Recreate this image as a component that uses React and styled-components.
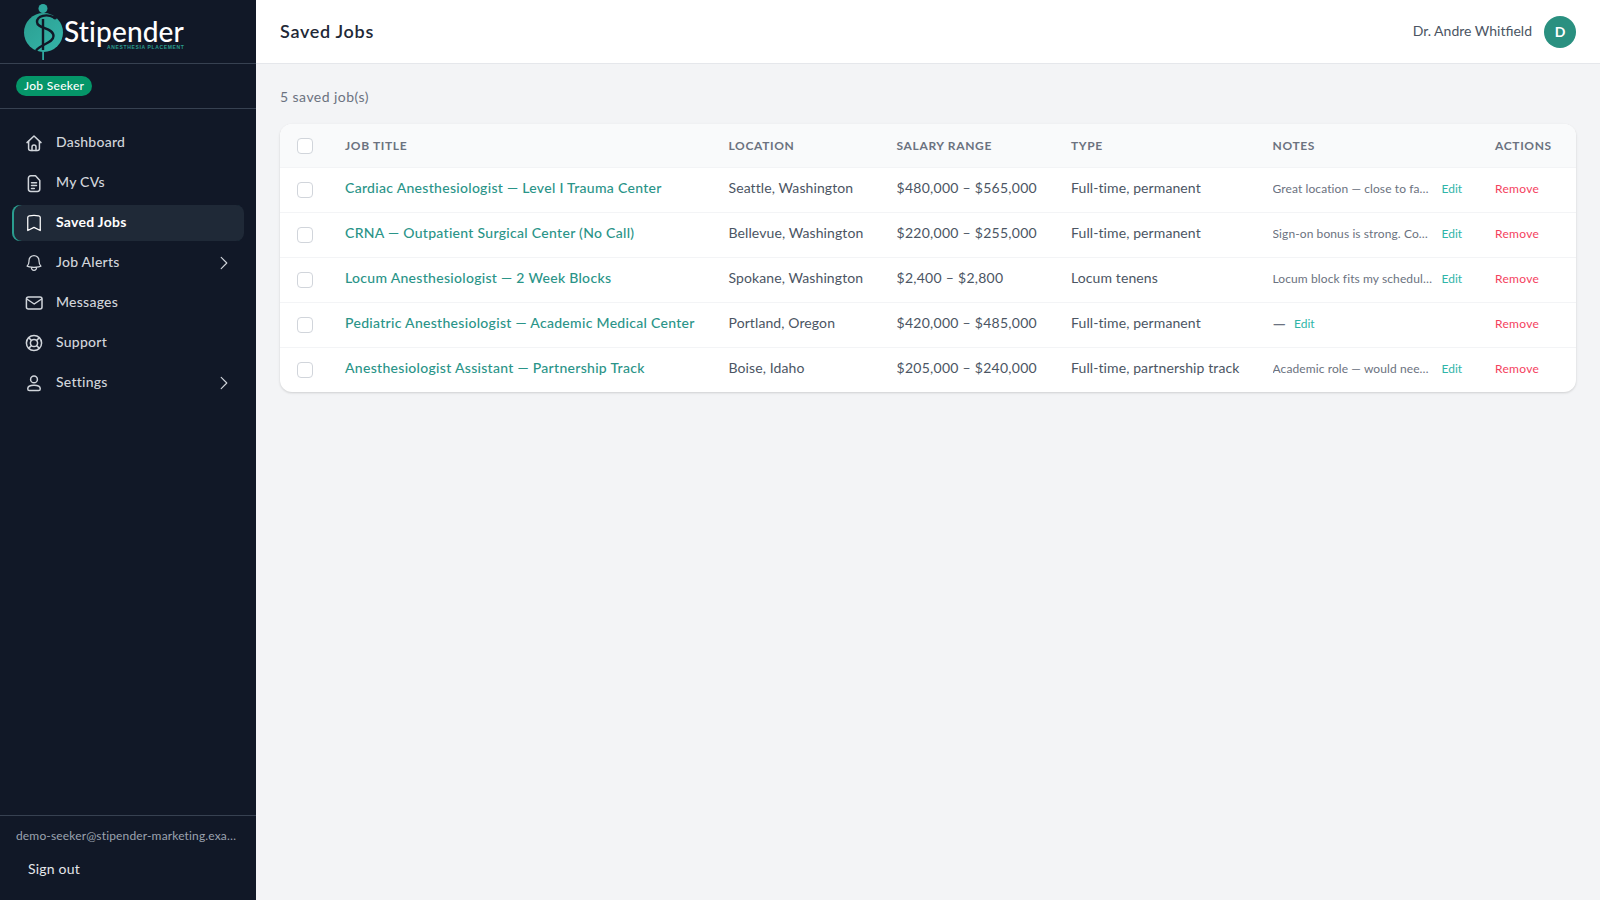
import React from 'react';
import styled, { createGlobalStyle } from 'styled-components';
import { HiOutlineBookmark, HiOutlineBell, HiOutlineChevronRight } from 'react-icons/hi2';

const GlobalStyle = createGlobalStyle`
  html, body { margin: 0; padding: 0; height: 100%; }
  body { font-family: "Lato", "Liberation Sans", sans-serif; background: #f3f4f6; }
  * { box-sizing: border-box; }
`;

const Shell = styled.div`
  display: flex;
  height: 900px;
  overflow: hidden;
`;

const Sidebar = styled.aside`
  width: 256px;
  flex: none;
  display: flex;
  flex-direction: column;
  background: #111827;
`;

const Brand = styled.div`
  height: 64px;
  flex: none;
  display: flex;
  align-items: flex-start;
  padding-left: 22px;
  border-bottom: 1px solid #374151;
`;

const BrandWords = styled.div`
  position: relative;
  margin-top: 13px;
  color: #fff;
  font-size: 28px;
  line-height: 36px;
  font-weight: 500;
  letter-spacing: 0.15px;
`;

const BrandTag = styled.span`
  position: absolute;
  left: 43px;
  top: 31px;
  color: #2a9d8f;
  font-family: "Liberation Sans", sans-serif;
  font-size: 5px;
  line-height: 6px;
  font-weight: 700;
  letter-spacing: 0.65px;
  white-space: nowrap;
`;

const RoleRow = styled.div`
  height: 45px;
  flex: none;
  display: flex;
  align-items: center;
  padding-left: 16px;
  border-bottom: 1px solid #374151;
`;

const RoleBadge = styled.span`
  height: 20px;
  padding: 0 8px 1px;
  display: inline-flex;
  align-items: center;
  border-radius: 999px;
  background: #059669;
  color: #fff;
  font-size: 12px;
  font-weight: 500;
  letter-spacing: 0.3px;
`;

const Nav = styled.nav`
  flex: 1;
  display: flex;
  flex-direction: column;
  gap: 4px;
  padding: 16px 12px;
`;

const NavItem = styled.a`
  height: 36px;
  display: flex;
  align-items: center;
  gap: 12px;
  padding: 0 11px 0 12px;
  border-radius: 8px;
  font-size: 14px;
  font-weight: ${p => (p.$active ? 700 : 500)};
  color: ${p => (p.$active ? '#fff' : '#d1d5db')};
  background: ${p => (p.$active ? '#1f2937' : 'transparent')};
  box-shadow: ${p => (p.$active ? 'inset 2px 0 0 #2a9d8f' : 'none')};
  > svg { font-size: 20px; flex: none; }
  > svg.more { font-size: 18px; }
`;

const NavLabel = styled.span`
  flex: 1;
  padding-bottom: 3px;
  letter-spacing: 0.25px;
`;

const LineIcon = styled.svg.attrs({ viewBox: '0 0 20 20', fill: 'none' })`
  width: 20px;
  height: 20px;
  stroke: currentColor;
  stroke-width: 1.5;
  stroke-linecap: round;
  stroke-linejoin: round;
`;

const HomeIcon = () => (
  <LineIcon>
    <path d="M3 9.6 10 3l7 6.6" />
    <path d="M4.6 8.2V15.5a2 2 0 0 0 2 2h6.8a2 2 0 0 0 2-2V8.2" />
    <path d="M8 17.5v-3.6a2 2 0 0 1 4 0v3.6" />
  </LineIcon>
);

const DocIcon = () => (
  <LineIcon>
    <path d="M6.8 2.8h4.7l4.3 4.6V16a2.4 2.4 0 0 1-2.4 2.4H6.8A2.4 2.4 0 0 1 4.4 16V5.2a2.4 2.4 0 0 1 2.4-2.4z" />
    <path d="M7.5 9.8h5M7.5 12.6h5M7.5 15.4h2.8" />
  </LineIcon>
);

const MailIcon = () => (
  <LineIcon>
    <rect x="2.4" y="4" width="15.6" height="12" rx="2" />
    <path d="M2.8 6l7.4 5 7.4-5" />
  </LineIcon>
);

const SupportIcon = () => (
  <LineIcon>
    <circle cx="10" cy="10" r="7.6" />
    <circle cx="10" cy="10" r="3.6" />
    <path d="M4.7 4.7l2.7 2.7M15.3 4.7l-2.7 2.7M4.7 15.3l2.7-2.7M15.3 15.3l-2.7-2.7" />
  </LineIcon>
);

const UserIcon = () => (
  <LineIcon>
    <circle cx="10" cy="6.4" r="3.4" />
    <path d="M3.8 15.6c0-2.4 2.8-3.4 6.2-3.4s6.2 1 6.2 3.4v.4a1.6 1.6 0 0 1-1.6 1.6H5.4A1.6 1.6 0 0 1 3.8 16z" />
  </LineIcon>
);

const SideFoot = styled.div`
  flex: none;
  height: 85px;
  padding: 12px 16px 0;
  border-top: 1px solid #374151;
`;

const Email = styled.div`
  color: #9ca3af;
  font-size: 12px;
  line-height: 16px;
  letter-spacing: 0.15px;
  white-space: nowrap;
  overflow: hidden;
  text-overflow: ellipsis;
`;

const SignOut = styled.button`
  display: block;
  margin-top: 15px;
  padding: 0 12px;
  border: 0;
  background: none;
  color: #e5e7eb;
  font-family: inherit;
  font-size: 14px;
  line-height: 20px;
  letter-spacing: 0.2px;
`;

const Main = styled.main`
  flex: 1;
  min-width: 0;
  display: flex;
  flex-direction: column;
`;

const TopBar = styled.header`
  height: 64px;
  flex: none;
  display: flex;
  align-items: center;
  justify-content: space-between;
  padding: 0 24px;
  background: #fff;
  border-bottom: 1px solid #e5e7eb;
`;

const Title = styled.h1`
  margin: 0;
  color: #1f2937;
  font-size: 18px;
  font-weight: 600;
  letter-spacing: 0.7px;
  padding-bottom: 1px;
`;

const UserBox = styled.div`
  display: flex;
  align-items: center;
  gap: 12px;
  color: #4b5563;
  font-size: 14px;
`;

const UserName = styled.span`
  padding-bottom: 2px;
`;

const Avatar = styled.div`
  width: 32px;
  height: 32px;
  border-radius: 50%;
  display: flex;
  align-items: center;
  justify-content: center;
  background: #2a9080;
  color: #fff;
  font-size: 14px;
  font-weight: 700;
`;

const Content = styled.div`
  padding: 24px;
`;

const Count = styled.p`
  margin: 0 0 16px;
  height: 20px;
  color: #6b7280;
  font-size: 14px;
  line-height: 18px;
  letter-spacing: 0.45px;
`;

const Card = styled.div`
  background: #fff;
  border-radius: 12px;
  overflow: hidden;
  box-shadow: 0 1px 3px rgba(0, 0, 0, 0.1), 0 1px 2px rgba(0, 0, 0, 0.06);
`;

const Table = styled.table`
  width: 100%;
  table-layout: fixed;
  border-collapse: collapse;
`;

const Th = styled.th`
  height: 43px;
  padding: 0 0 0 16px;
  background: #f9fafb;
  border-bottom: 1px solid #f3f4f6;
  text-align: left;
  color: #6b7280;
  font-size: 12px;
  font-weight: 700;
  letter-spacing: 0.65px;
  text-transform: uppercase;
`;

const Td = styled.td`
  height: 45px;
  padding: 0 0 ${p => p.$lift || 0}px 16px;
  border-bottom: 1px solid #f3f4f6;
  color: #4b5563;
  font-size: 14px;
  letter-spacing: ${p => p.$track || '0.1px'};
  white-space: nowrap;
  tr:last-child & { border-bottom: 0; }
`;

const Check = styled.span`
  display: block;
  margin: ${p => (p.$head ? '1px' : 0)} 0 0 1px;
  width: 16px;
  height: 16px;
  border: 1px solid #d1d5db;
  border-radius: 4px;
  background: #fff;
`;

const JobLink = styled.a`
  color: #2a9488;
  font-weight: 500;
  letter-spacing: 0.3px;
`;

const NotesCell = styled.div`
  display: flex;
  align-items: center;
  gap: 8px;
  font-size: 12px;
  letter-spacing: 0;
  color: #6b7280;
`;

const NoteText = styled.span`
  display: block;
  max-width: 161px;
  overflow: hidden;
  text-overflow: ellipsis;
  font-size: ${p => (p.$empty ? '17px' : '12px')};
  letter-spacing: 0.1px;
`;

const EditLink = styled.a`
  color: #2fb5a8;
`;

const RemoveLink = styled.a`
  display: block;
  color: #f43f5e;
  font-size: 12px;
  letter-spacing: 0.3px;
`;

const navItems = [
  { label: 'Dashboard', Icon: HomeIcon },
  { label: 'My CVs', Icon: DocIcon },
  { label: 'Saved Jobs', Icon: HiOutlineBookmark, active: true },
  { label: 'Job Alerts', Icon: HiOutlineBell, more: true },
  { label: 'Messages', Icon: MailIcon },
  { label: 'Support', Icon: SupportIcon },
  { label: 'Settings', Icon: UserIcon, more: true },
];

const jobs = [
  { title: 'Cardiac Anesthesiologist — Level I Trauma Center', location: 'Seattle, Washington', salary: '$480,000 – $565,000', type: 'Full-time, permanent', note: 'Great location — close to family and schools' },
  { title: 'CRNA — Outpatient Surgical Center (No Call)', location: 'Bellevue, Washington', salary: '$220,000 – $255,000', type: 'Full-time, permanent', note: 'Sign-on bonus is strong. Compare with others' },
  { title: 'Locum Anesthesiologist — 2 Week Blocks', location: 'Spokane, Washington', salary: '$2,400 – $2,800', type: 'Locum tenens', note: 'Locum block fits my schedule this coming year' },
  { title: 'Pediatric Anesthesiologist — Academic Medical Center', location: 'Portland, Oregon', salary: '$420,000 – $485,000', type: 'Full-time, permanent', note: null },
  { title: 'Anesthesiologist Assistant — Partnership Track', location: 'Boise, Idaho', salary: '$205,000 – $240,000', type: 'Full-time, partnership track', note: 'Academic role — would need to relocate family' },
];

const Logo = () => (
  <svg width="42" height="64" viewBox="0 0 42 64">
    <defs>
      <linearGradient id="logoFill" x1="0" y1="0" x2="1" y2="1">
        <stop offset="0" stopColor="#2a9d8f" />
        <stop offset="1" stopColor="#35b5aa" />
      </linearGradient>
    </defs>
    <circle cx="21" cy="8.5" r="4.5" fill="#2fa89f" />
    <circle cx="21.5" cy="32.5" r="19.5" fill="url(#logoFill)" />
    <rect x="20.2" y="50" width="1.8" height="10" fill="#2fa89f" />
    <rect x="19.8" y="19" width="2.4" height="31" fill="#111827" />
    <path d="M32 17.5 C25 13.5 15 15.5 15 22 C15 29 31.5 27.5 31.5 36 C31.5 43 19 44 14.5 50" fill="none" stroke="#111827" strokeWidth="2.4" strokeLinecap="round" />
    <circle cx="33" cy="17.5" r="2" fill="#111827" />
  </svg>
);

export default function App() {
  return (
    <Shell>
      <GlobalStyle />
      <Sidebar>
        <Brand>
          <Logo />
          <BrandWords>
            Stipender
            <BrandTag>ANESTHESIA PLACEMENT</BrandTag>
          </BrandWords>
        </Brand>
        <RoleRow>
          <RoleBadge>Job Seeker</RoleBadge>
        </RoleRow>
        <Nav>
          {navItems.map(({ label, Icon, active, more }) => (
            <NavItem key={label} $active={active}>
              <Icon />
              <NavLabel>{label}</NavLabel>
              {more && <HiOutlineChevronRight className="more" />}
            </NavItem>
          ))}
        </Nav>
        <SideFoot>
          <Email>demo-seeker@stipender-marketing.example.com</Email>
          <SignOut>Sign out</SignOut>
        </SideFoot>
      </Sidebar>
      <Main>
        <TopBar>
          <Title>Saved Jobs</Title>
          <UserBox>
            <UserName>Dr. Andre Whitfield</UserName>
            <Avatar>D</Avatar>
          </UserBox>
        </TopBar>
        <Content>
          <Count>5 saved job(s)</Count>
          <Card>
            <Table>
              <colgroup>
                <col style={{ width: 49 }} />
                <col style={{ width: 383.5 }} />
                <col style={{ width: 168 }} />
                <col style={{ width: 174.5 }} />
                <col style={{ width: 201.5 }} />
                <col style={{ width: 222.5 }} />
                <col />
              </colgroup>
              <thead>
                <tr>
                  <Th><Check $head /></Th>
                  <Th>Job title</Th>
                  <Th>Location</Th>
                  <Th>Salary range</Th>
                  <Th>Type</Th>
                  <Th>Notes</Th>
                  <Th>Actions</Th>
                </tr>
              </thead>
              <tbody>
                {jobs.map(job => (
                  <tr key={job.title}>
                    <Td><Check /></Td>
                    <Td $lift={5}><JobLink>{job.title}</JobLink></Td>
                    <Td $lift={5}>{job.location}</Td>
                    <Td $lift={5} $track="0.27px">{job.salary}</Td>
                    <Td $lift={5}>{job.type}</Td>
                    <Td $lift={3}>
                      <NotesCell>
                        <NoteText $empty={!job.note}>{job.note || '—'}</NoteText>
                        <EditLink>Edit</EditLink>
                      </NotesCell>
                    </Td>
                    <Td $lift={3}><RemoveLink>Remove</RemoveLink></Td>
                  </tr>
                ))}
              </tbody>
            </Table>
          </Card>
        </Content>
      </Main>
    </Shell>
  );
}
